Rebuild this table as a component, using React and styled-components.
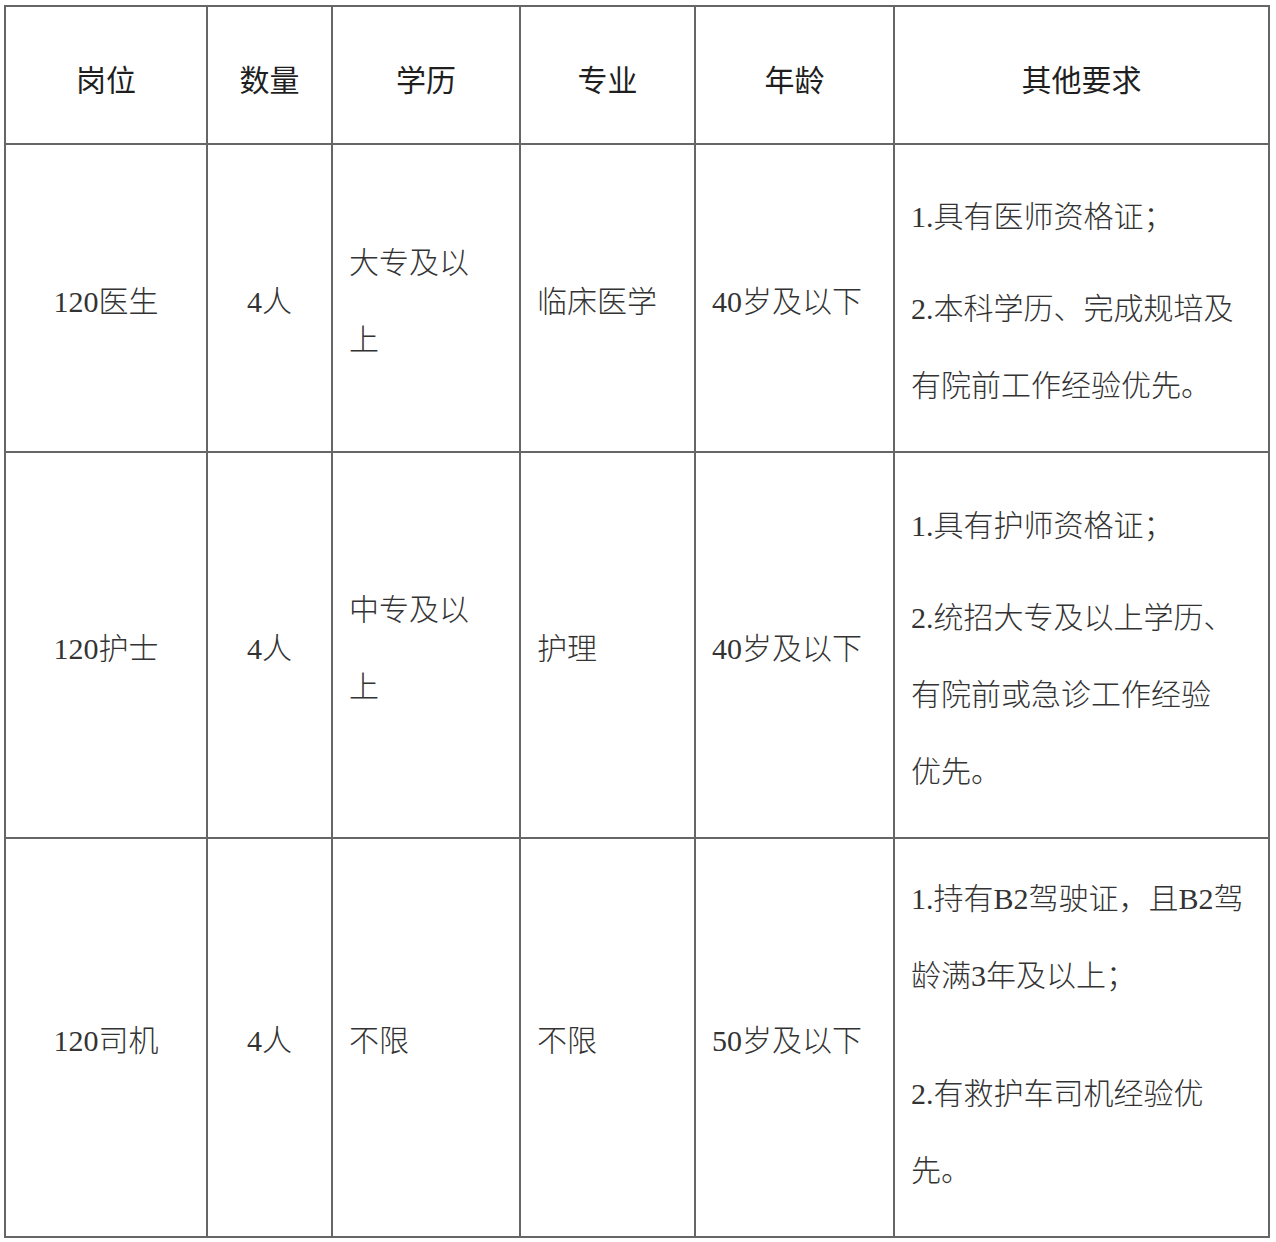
import React from 'react';
import styled, { createGlobalStyle } from 'styled-components';

const GlobalStyle = createGlobalStyle`
  html, body {
    margin: 0;
    padding: 0;
    background: #fff;
  }
  body {
    font-family: "Liberation Serif", "Noto Sans CJK SC", serif;
    color: #333;
  }
`;

const Page = styled.div`
  padding: 5px 0 0 4px;
`;

const Table = styled.table`
  border-collapse: collapse;
  table-layout: fixed;
  width: 1266px;
  border: 2px solid #666;
`;

const Col = styled.col`
  width: ${(p) => p.$w}px;
`;

const Row = styled.tr`
  height: ${(p) => p.$h}px;
`;

const HeadCell = styled.th`
  border: 2px solid #666;
  padding: 6px 0 0;
  font-size: 30px;
  font-weight: 400;
  color: #1f1f1f;
  text-align: center;
  vertical-align: middle;
`;

const Cell = styled.td`
  border: 2px solid #666;
  padding: ${(p) => (p.$center ? '6px 0 0' : `6px 10px ${p.$pb || 0}px 16px`)};
  font-size: 30px;
  font-weight: 300;
  line-height: 77px;
  text-align: ${(p) => (p.$center ? 'center' : 'left')};
  vertical-align: middle;
  white-space: nowrap;
`;

const Para = styled.p`
  margin: ${(p) => p.$gap || 0}px 0 0;
`;

const columns = [202, 125, 188, 175, 199, 375];
const headers = ['岗位', '数量', '学历', '专业', '年龄', '其他要求'];

const rows = [
  {
    height: 308,
    post: '120医生',
    count: '4人',
    edu: ['大专及以', '上'],
    major: '临床医学',
    age: '40岁及以下',
    gap: 15,
    pb: 0,
    notes: [['1.具有医师资格证；'], ['2.本科学历、完成规培及', '有院前工作经验优先。']],
  },
  {
    height: 386,
    post: '120护士',
    count: '4人',
    edu: ['中专及以', '上'],
    major: '护理',
    age: '40岁及以下',
    gap: 15,
    pb: 0,
    notes: [
      ['1.具有护师资格证；'],
      ['2.统招大专及以上学历、', '有院前或急诊工作经验', '优先。'],
    ],
  },
  {
    height: 399,
    post: '120司机',
    count: '4人',
    edu: ['不限'],
    major: '不限',
    age: '50岁及以下',
    gap: 41,
    pb: 12,
    notes: [['1.持有B2驾驶证，且B2驾', '龄满3年及以上；'], ['2.有救护车司机经验优', '先。']],
  },
];

const Lines = ({ lines }) =>
  lines.map((line, i) => (
    <React.Fragment key={line}>
      {i > 0 && <br />}
      {line}
    </React.Fragment>
  ));

const App = () => (
  <Page>
    <GlobalStyle />
    <Table>
      <colgroup>
        {columns.map((w, i) => (
          <Col key={i} $w={w} />
        ))}
      </colgroup>
      <thead>
        <Row $h={138}>
          {headers.map((h) => (
            <HeadCell key={h}>{h}</HeadCell>
          ))}
        </Row>
      </thead>
      <tbody>
        {rows.map((r) => (
          <Row key={r.post} $h={r.height}>
            <Cell $center>{r.post}</Cell>
            <Cell $center>{r.count}</Cell>
            <Cell>
              <Lines lines={r.edu} />
            </Cell>
            <Cell>{r.major}</Cell>
            <Cell>{r.age}</Cell>
            <Cell $pb={r.pb}>
              {r.notes.map((para, i) => (
                <Para key={i} $gap={i > 0 ? r.gap : 0}>
                  <Lines lines={para} />
                </Para>
              ))}
            </Cell>
          </Row>
        ))}
      </tbody>
    </Table>
  </Page>
);

export default App;
